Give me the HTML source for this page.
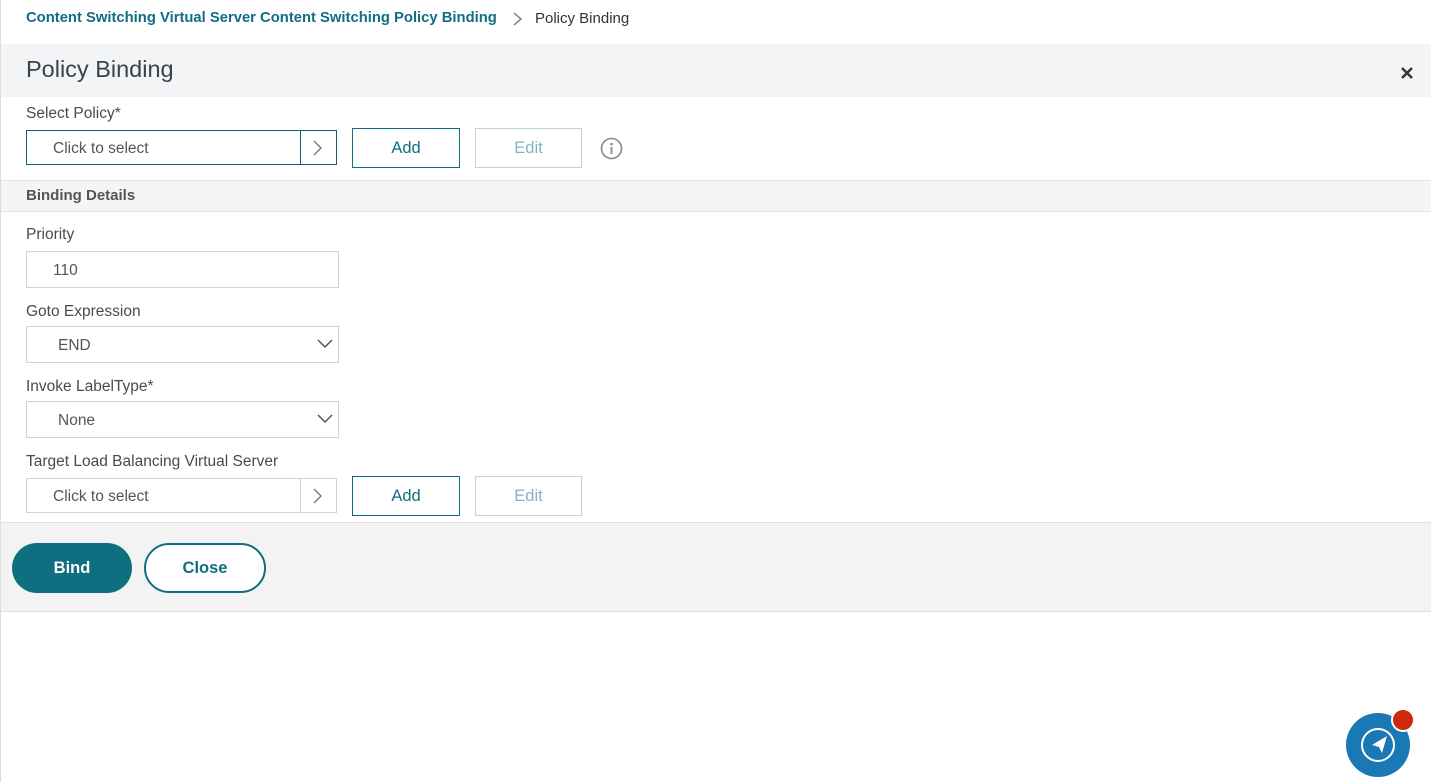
<!DOCTYPE html>
<html><head><style>
body{margin:0;width:1431px;height:782px;background:#fff;font-family:"Liberation Sans",sans-serif;position:relative;overflow:hidden}
.a{position:absolute}
.lbl{font-size:15.5px;color:#4a4a4a}
.inp{border:1px solid #cfd3d6;box-sizing:border-box;background:#fff;font-size:15.5px;color:#555}
.btn{border:1px solid #0f6e80;box-sizing:border-box;color:#0f6e80;font-size:16.5px;text-align:center;background:#fff}
.dis{border:1px solid #b9d4da;color:#7fb4c0}
</style></head><body>
<div class="a" style="left:0;top:0;width:1px;height:782px;background:#ddd;z-index:5"></div>
<div class="a" style="left:26px;top:10px;font-size:14.8px;font-weight:bold;color:#0f6e80">Content Switching Virtual Server Content Switching Policy Binding</div>
<svg class="a" style="left:512px;top:11px" width="12" height="16"><path d="M2 2l7 6-7 6" fill="none" stroke="#777" stroke-width="1.4"/></svg>
<div class="a" style="left:535px;top:10px;font-size:15px;color:#333">Policy Binding</div>
<div class="a" style="left:0;top:44px;width:1431px;height:53px;background:#f3f4f5"></div>
<div class="a" style="left:26px;top:56px;font-size:23.5px;color:#3a4150">Policy Binding</div>
<svg class="a" style="left:1400px;top:66px" width="14" height="14"><path d="M2 2l10 10M12 2L2 12" stroke="#333" stroke-width="2.4"/></svg>
<div class="a lbl" style="left:26px;top:105px">Select Policy*</div>
<div class="a inp" style="left:26px;top:130px;width:311px;height:35px;border-color:#0f5f6e;padding:9px 0 0 26px">Click to select</div>
<div class="a" style="left:300px;top:131px;width:1px;height:33px;background:#0f5f6e"></div>
<svg class="a" style="left:312px;top:139px" width="12" height="18"><path d="M2 2l7 7-7 7" fill="none" stroke="#777" stroke-width="1.4"/></svg>
<div class="a btn" style="left:352px;top:128px;width:108px;height:40px;line-height:38px">Add</div>
<div class="a btn dis" style="left:475px;top:128px;width:107px;height:40px;line-height:38px">Edit</div>
<svg class="a" style="left:600px;top:137px" width="23" height="23"><circle cx="11.5" cy="11.5" r="10" fill="none" stroke="#888" stroke-width="1.6"/><circle cx="11.5" cy="7" r="1.3" fill="#888"/><path d="M11.5 10v7" stroke="#888" stroke-width="1.8"/></svg>
<div class="a" style="left:0;top:180px;width:1431px;height:32px;background:#f5f5f5;border-top:1px solid #e2e2e2;border-bottom:1px solid #e2e2e2;box-sizing:border-box"></div>
<div class="a" style="left:26px;top:187px;font-size:15px;font-weight:bold;color:#555">Binding Details</div>
<div class="a lbl" style="left:26px;top:226px">Priority</div>
<div class="a inp" style="left:26px;top:251px;width:313px;height:37px;padding:10px 0 0 26px">110</div>
<div class="a lbl" style="left:26px;top:303px">Goto Expression</div>
<div class="a inp" style="left:26px;top:326px;width:313px;height:37px;padding:10px 0 0 31px">END</div>
<svg class="a" style="left:317px;top:339px" width="16" height="10"><path d="M1 1l7 7 7-7" fill="none" stroke="#555" stroke-width="1.5"/></svg>
<div class="a lbl" style="left:26px;top:378px">Invoke LabelType*</div>
<div class="a inp" style="left:26px;top:401px;width:313px;height:37px;padding:10px 0 0 31px">None</div>
<svg class="a" style="left:317px;top:414px" width="16" height="10"><path d="M1 1l7 7 7-7" fill="none" stroke="#555" stroke-width="1.5"/></svg>
<div class="a lbl" style="left:26px;top:453px">Target Load Balancing Virtual Server</div>
<div class="a inp" style="left:26px;top:478px;width:311px;height:35px;padding:9px 0 0 26px">Click to select</div>
<div class="a" style="left:300px;top:479px;width:1px;height:33px;background:#cfd3d6"></div>
<svg class="a" style="left:312px;top:487px" width="12" height="18"><path d="M2 2l7 7-7 7" fill="none" stroke="#777" stroke-width="1.4"/></svg>
<div class="a btn" style="left:352px;top:476px;width:108px;height:40px;line-height:38px">Add</div>
<div class="a btn dis" style="left:475px;top:476px;width:107px;height:40px;line-height:38px">Edit</div>
<div class="a" style="left:0;top:522px;width:1431px;height:90px;background:#f3f3f3;border-top:1px solid #e2e2e2;border-bottom:1px solid #ddd;box-sizing:border-box"></div>
<div class="a" style="left:12px;top:543px;width:120px;height:50px;border-radius:25px;background:#0f6e80;color:#fff;font-weight:bold;font-size:16.5px;text-align:center;line-height:50px">Bind</div>
<div class="a" style="left:144px;top:543px;width:122px;height:50px;border-radius:25px;border:2px solid #0f6e80;box-sizing:border-box;background:#fff;color:#0f6e80;font-weight:bold;font-size:16.5px;text-align:center;line-height:46px">Close</div>
<svg class="a" style="left:1340px;top:705px" width="91" height="77"><circle cx="38" cy="40" r="32" fill="#1a78b4"/><circle cx="38" cy="40" r="16" fill="none" stroke="#fff" stroke-width="2"/><path d="M47 31l-5 17-3-6-7-2z" fill="#fff"/><circle cx="63" cy="15" r="11" fill="#cc2a0c" stroke="#fff" stroke-width="2"/></svg>
</body></html>
